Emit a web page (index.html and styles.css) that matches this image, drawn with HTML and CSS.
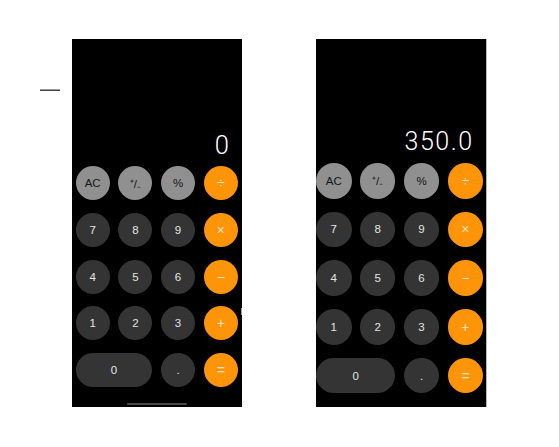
FILE: index.html
```html
<!DOCTYPE html>
<html lang="en">
<head>
    <meta charset="utf-8" />
    <title>Calculator</title>
    <link rel="stylesheet" href="styles.css">
</head>
<body>

<div class="stage">
    <div class="dash"></div>

    <!-- calculator, empty state -->
    <div class="phone phone-a">
        <div class="display">0</div>
        <div class="keys">
            <span class="key fn">AC</span>
            <span class="key fn">&#8314;/&#8331;</span>
            <span class="key fn">%</span>
            <span class="key op">&divide;</span>
            <span class="key">7</span>
            <span class="key">8</span>
            <span class="key">9</span>
            <span class="key op">&times;</span>
            <span class="key">4</span>
            <span class="key">5</span>
            <span class="key">6</span>
            <span class="key op">&minus;</span>
            <span class="key">1</span>
            <span class="key">2</span>
            <span class="key">3</span>
            <span class="key op">+</span>
            <span class="key wide">0</span>
            <span class="key">.</span>
            <span class="key op">=</span>
        </div>
        <div class="home"></div>
        <div class="edge"></div>
    </div>

    <!-- calculator, with result -->
    <div class="phone phone-b">
        <div class="display">350.0</div>
        <div class="keys">
            <span class="key fn">AC</span>
            <span class="key fn">&#8314;/&#8331;</span>
            <span class="key fn">%</span>
            <span class="key op">&divide;</span>
            <span class="key">7</span>
            <span class="key">8</span>
            <span class="key">9</span>
            <span class="key op">&times;</span>
            <span class="key">4</span>
            <span class="key">5</span>
            <span class="key">6</span>
            <span class="key op">&minus;</span>
            <span class="key">1</span>
            <span class="key">2</span>
            <span class="key">3</span>
            <span class="key op">+</span>
            <span class="key wide">0</span>
            <span class="key">.</span>
            <span class="key op">=</span>
        </div>
    </div>
</div>

</body>
</html>
```

FILE: styles.css
```css
body { margin: 0; background: #fff; font-family: "Liberation Sans", Arial, sans-serif; }

.stage { display: flex; align-items: flex-start; padding: 39px 0 0 40px; }

.dash { width: 20px; height: 1px; margin: 50px 12px 0 0; border-top: 1px solid #9a9a9a; background: #444; }

.phone { position: relative; width: 170px; height: 368px; background: #000; display: flex; flex-direction: column; }
.phone-b { margin-left: 74px; border-right: 1px solid #b8b8b8; }

.display { color: #fff; text-align: right; font-family: Roboto, "Liberation Sans", sans-serif; font-weight: 300; line-height: 1; display: flex; flex-direction: column; justify-content: flex-end; box-sizing: border-box; }
.phone-a .display { height: 127px; padding: 0 12px 8px 0; font-size: 25.5px; letter-spacing: 1px; }
.phone-b .display { height: 124px; padding: 0 12.5px 9px 0; font-size: 25px; letter-spacing: 1.5px; }

.keys { display: grid; }
.phone-a .keys { grid-template-columns: repeat(4, 34px); grid-auto-rows: 34px; column-gap: 8.7px; row-gap: 12.8px; padding: 0 4px 0 3.7px; }
.phone-b .keys { grid-template-columns: repeat(4, 35.5px); grid-auto-rows: 35.5px; column-gap: 8.4px; row-gap: 13.2px; padding: 0; }

.key { display: flex; align-items: center; justify-content: center; border-radius: 18px; background: #333433; color: #e4e4e4; font-size: 11.5px; }
.key.fn { background: #8f908f; color: #161616; }
.key.op { background: #fe9508; color: #ffe3c2; font-size: 14px; font-weight: 300; }
.key.wide { grid-column: span 2; }

.home { width: 60px; height: 2px; margin: 16px auto 0; border-radius: 1px; background: #4a4a4a; }

.edge { position: absolute; right: 0; top: 269px; width: 1.5px; height: 7px; background: #9c9c9c; }
```
